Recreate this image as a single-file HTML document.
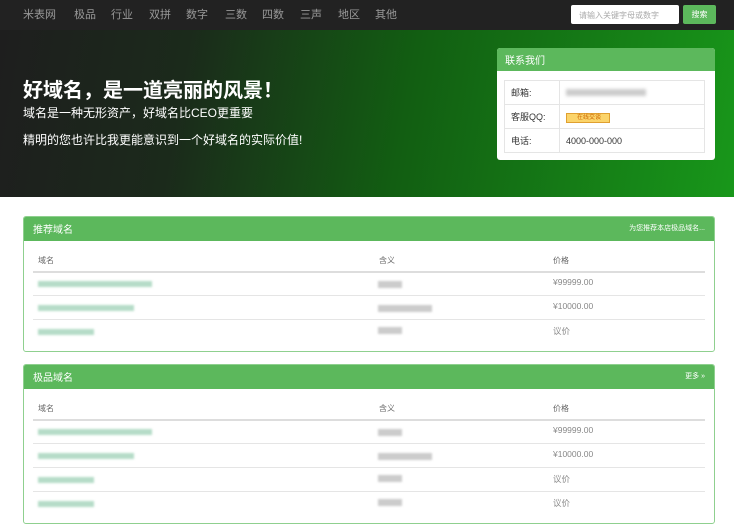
<!DOCTYPE html><html><head><meta charset="utf-8"><style>
*{margin:0;padding:0;box-sizing:border-box}
body{width:734px;height:516px;overflow:hidden;background:#fff;font-family:"Liberation Sans","Noto Sans CJK SC",sans-serif;font-size:10px;color:#555}
.nav{height:30px;background:#222;position:relative}
.nav span{position:absolute;top:6px;color:#999;font-size:11px}
.inp{position:absolute;left:571px;top:5px;width:108px;height:19px;background:#fff;border-radius:2px;font-size:8px;color:#aaa;padding:5px 8px}
.btn{position:absolute;left:683px;top:5px;width:33px;height:19px;background:#5cb85c;border-radius:2px;color:#fff;font-size:8px;text-align:center;line-height:19px}
.hero{position:absolute;top:30px;left:0;width:734px;height:167px;background:linear-gradient(100deg,#1e1e1e 0%,#1b2a1b 25%,#125e12 55%,#18971a 100%)}
.h1{position:absolute;left:23px;top:74px;color:#fff;font-size:20px;font-weight:bold}
.h2{position:absolute;left:23px;top:104px;color:#fff;font-size:12px}
.h3{position:absolute;left:23px;top:131px;color:#fff;font-size:12px}
.box{position:absolute;left:497px;top:48px;width:218px;height:112px;background:#fff;border-radius:3px;overflow:hidden}
.box .hd{background:#5cb85c;height:23px;color:#fff;font-size:10px;padding:4px 8px}
.box table{position:absolute;left:7px;top:32px;width:201px;border-collapse:collapse}
.box td{border:1px solid #e5e5e5;height:24px;font-size:9px;padding-left:6px;color:#333}
.panel{position:absolute;left:23px;width:692px;border:1px solid #8fd08f;border-radius:3px;overflow:hidden;background:#fff}
.panel .hd{background:#5cb85c;height:24px;color:#fff;font-size:10px;padding:4px 9px;position:relative}
.panel .hd i{position:absolute;right:9px;top:6px;font-style:normal;font-size:7px}
.row{position:absolute;left:9px;width:672px;border-top:1px solid #e5e5e5;height:24px}
.th{position:absolute;font-size:8px;color:#666}
.c{position:absolute;font-size:8.5px;color:#888}
.blur{position:absolute;height:6px;background:#b5dcc8;filter:blur(1px)}
.gb{position:absolute;height:7px;background:#ccc;filter:blur(1px)}
</style></head><body>
<div class="nav">
<span style="left:23px">米表网</span><span style="left:74px">极品</span><span style="left:111px">行业</span><span style="left:149px">双拼</span><span style="left:186px">数字</span><span style="left:225px">三数</span><span style="left:262px">四数</span><span style="left:300px">三声</span><span style="left:338px">地区</span><span style="left:375px">其他</span>
<div class="inp">请输入关键字母或数字</div><div class="btn">搜索</div>
</div>
<div class="hero"></div>
<div class="h1">好域名，是一道亮丽的风景！</div>
<div class="h2">域名是一种无形资产，好域名比CEO更重要</div>
<div class="h3">精明的您也许比我更能意识到一个好域名的实际价值!</div>
<div class="box"><div class="hd">联系我们</div>
<table><tr><td style="width:55px">邮箱:</td><td><div style="width:80px;height:7px;background:#ccc;filter:blur(1.5px)"></div></td></tr>
<tr><td>客服QQ:</td><td><span style="display:inline-block;width:44px;height:10px;background:#fbd46a;border:1px solid #e0a030;font-size:6px;color:#c60;line-height:8px;padding-left:10px">在线交谈</span></td></tr>
<tr><td>电话:</td><td>4000-000-000</td></tr></table></div>

<div class="panel" style="top:216px;height:136px"><div class="hd">推荐域名<i>为您推荐本店极品域名...</i></div>
<div class="th" style="left:14px;top:38px">域名</div><div class="th" style="left:355px;top:38px">含义</div><div class="th" style="left:529px;top:38px">价格</div>
<div class="row" style="top:54px;border-top:2px solid #ddd"></div><div class="row" style="top:78px"></div><div class="row" style="top:102px"></div>
<div class="blur" style="left:14px;top:64px;width:114px"></div><div class="gb" style="left:354px;top:64px;width:24px"></div><div class="c" style="left:529px;top:60px">¥99999.00</div>
<div class="blur" style="left:14px;top:88px;width:96px"></div><div class="gb" style="left:354px;top:88px;width:54px"></div><div class="c" style="left:529px;top:84px">¥10000.00</div>
<div class="blur" style="left:14px;top:112px;width:56px"></div><div class="gb" style="left:354px;top:110px;width:24px"></div><div class="c" style="left:529px;top:108px">议价</div>
</div>

<div class="panel" style="top:364px;height:160px"><div class="hd">极品域名<i>更多 »</i></div>
<div class="th" style="left:14px;top:38px">域名</div><div class="th" style="left:355px;top:38px">含义</div><div class="th" style="left:529px;top:38px">价格</div>
<div class="row" style="top:54px;border-top:2px solid #ddd"></div><div class="row" style="top:78px"></div><div class="row" style="top:102px"></div><div class="row" style="top:126px"></div>
<div class="blur" style="left:14px;top:64px;width:114px"></div><div class="gb" style="left:354px;top:64px;width:24px"></div><div class="c" style="left:529px;top:60px">¥99999.00</div>
<div class="blur" style="left:14px;top:88px;width:96px"></div><div class="gb" style="left:354px;top:88px;width:54px"></div><div class="c" style="left:529px;top:84px">¥10000.00</div>
<div class="blur" style="left:14px;top:112px;width:56px"></div><div class="gb" style="left:354px;top:110px;width:24px"></div><div class="c" style="left:529px;top:108px">议价</div>
<div class="blur" style="left:14px;top:136px;width:56px"></div><div class="gb" style="left:354px;top:134px;width:24px"></div><div class="c" style="left:529px;top:132px">议价</div>
</div>
</body></html>
